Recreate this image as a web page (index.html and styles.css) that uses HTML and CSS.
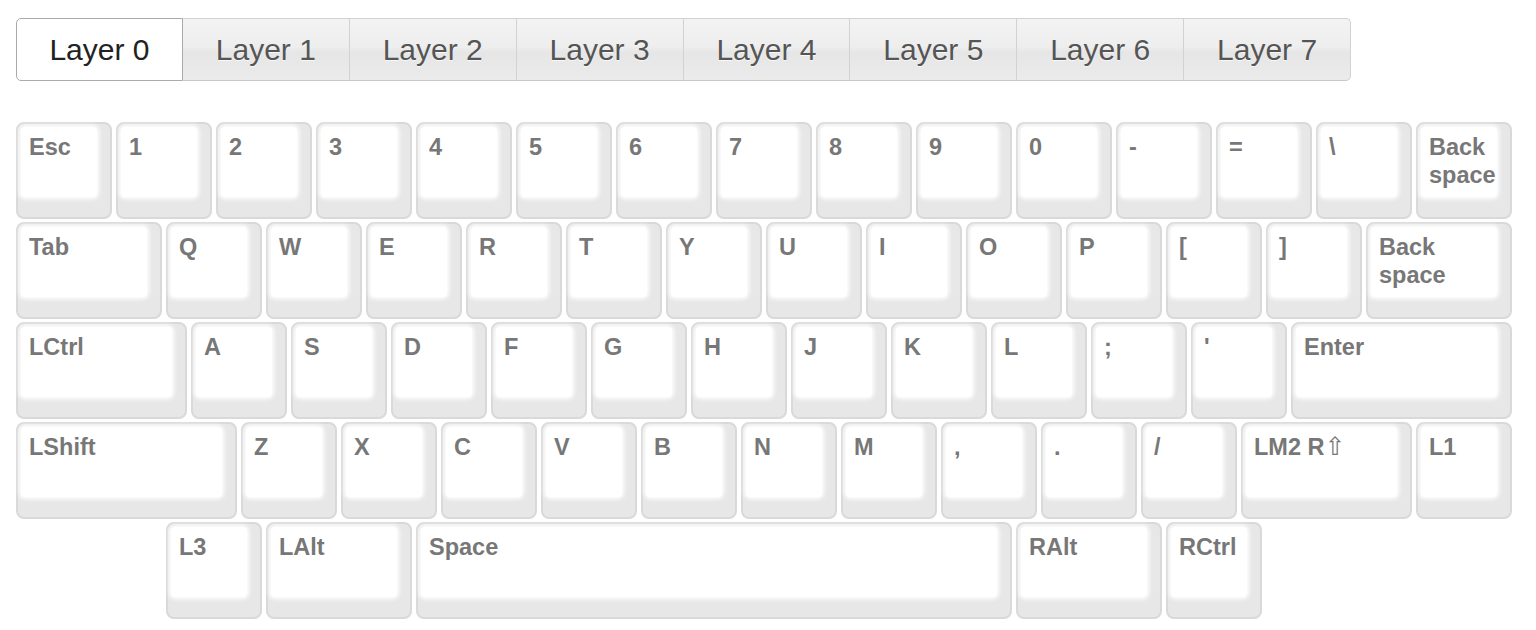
FILE: index.html
```html
<!DOCTYPE html>
<html lang="en">
<head>
<meta charset="utf-8">
<title>Keymap layers</title>
<link rel="stylesheet" href="styles.css">
</head>
<body>
<div class="page">
  <div class="tabs">
    <button class="tab active">Layer 0</button>
    <button class="tab">Layer 1</button>
    <button class="tab">Layer 2</button>
    <button class="tab">Layer 3</button>
    <button class="tab">Layer 4</button>
    <button class="tab">Layer 5</button>
    <button class="tab">Layer 6</button>
    <button class="tab">Layer 7</button>
  </div>

  <div class="keyboard">
    <div class="row">
      <div class="key"><div class="face"><span class="label">Esc</span></div></div>
      <div class="key"><div class="face"><span class="label">1</span></div></div>
      <div class="key"><div class="face"><span class="label">2</span></div></div>
      <div class="key"><div class="face"><span class="label">3</span></div></div>
      <div class="key"><div class="face"><span class="label">4</span></div></div>
      <div class="key"><div class="face"><span class="label">5</span></div></div>
      <div class="key"><div class="face"><span class="label">6</span></div></div>
      <div class="key"><div class="face"><span class="label">7</span></div></div>
      <div class="key"><div class="face"><span class="label">8</span></div></div>
      <div class="key"><div class="face"><span class="label">9</span></div></div>
      <div class="key"><div class="face"><span class="label">0</span></div></div>
      <div class="key"><div class="face"><span class="label">-</span></div></div>
      <div class="key"><div class="face"><span class="label">=</span></div></div>
      <div class="key"><div class="face"><span class="label">\</span></div></div>
      <div class="key"><div class="face"><span class="label">Back<br>space</span></div></div>
    </div>
    <div class="row">
      <div class="key w150"><div class="face"><span class="label">Tab</span></div></div>
      <div class="key"><div class="face"><span class="label">Q</span></div></div>
      <div class="key"><div class="face"><span class="label">W</span></div></div>
      <div class="key"><div class="face"><span class="label">E</span></div></div>
      <div class="key"><div class="face"><span class="label">R</span></div></div>
      <div class="key"><div class="face"><span class="label">T</span></div></div>
      <div class="key"><div class="face"><span class="label">Y</span></div></div>
      <div class="key"><div class="face"><span class="label">U</span></div></div>
      <div class="key"><div class="face"><span class="label">I</span></div></div>
      <div class="key"><div class="face"><span class="label">O</span></div></div>
      <div class="key"><div class="face"><span class="label">P</span></div></div>
      <div class="key"><div class="face"><span class="label">[</span></div></div>
      <div class="key"><div class="face"><span class="label">]</span></div></div>
      <div class="key w150"><div class="face"><span class="label">Back<br>space</span></div></div>
    </div>
    <div class="row">
      <div class="key w175"><div class="face"><span class="label">LCtrl</span></div></div>
      <div class="key"><div class="face"><span class="label">A</span></div></div>
      <div class="key"><div class="face"><span class="label">S</span></div></div>
      <div class="key"><div class="face"><span class="label">D</span></div></div>
      <div class="key"><div class="face"><span class="label">F</span></div></div>
      <div class="key"><div class="face"><span class="label">G</span></div></div>
      <div class="key"><div class="face"><span class="label">H</span></div></div>
      <div class="key"><div class="face"><span class="label">J</span></div></div>
      <div class="key"><div class="face"><span class="label">K</span></div></div>
      <div class="key"><div class="face"><span class="label">L</span></div></div>
      <div class="key"><div class="face"><span class="label">;</span></div></div>
      <div class="key"><div class="face"><span class="label">'</span></div></div>
      <div class="key w225"><div class="face"><span class="label">Enter</span></div></div>
    </div>
    <div class="row">
      <div class="key w225"><div class="face"><span class="label">LShift</span></div></div>
      <div class="key"><div class="face"><span class="label">Z</span></div></div>
      <div class="key"><div class="face"><span class="label">X</span></div></div>
      <div class="key"><div class="face"><span class="label">C</span></div></div>
      <div class="key"><div class="face"><span class="label">V</span></div></div>
      <div class="key"><div class="face"><span class="label">B</span></div></div>
      <div class="key"><div class="face"><span class="label">N</span></div></div>
      <div class="key"><div class="face"><span class="label">M</span></div></div>
      <div class="key"><div class="face"><span class="label">,</span></div></div>
      <div class="key"><div class="face"><span class="label">.</span></div></div>
      <div class="key"><div class="face"><span class="label">/</span></div></div>
      <div class="key w175"><div class="face"><span class="label">LM2 R<span class="arrow">⇧</span></span></div></div>
      <div class="key"><div class="face"><span class="label">L1</span></div></div>
    </div>
    <div class="row">
      <div class="gap150"></div>
      <div class="key"><div class="face"><span class="label">L3</span></div></div>
      <div class="key w150"><div class="face"><span class="label">LAlt</span></div></div>
      <div class="key w600"><div class="face"><span class="label">Space</span></div></div>
      <div class="key w150"><div class="face"><span class="label">RAlt</span></div></div>
      <div class="key"><div class="face"><span class="label">RCtrl</span></div></div>
    </div>
  </div>
</div>
</body>
</html>
```

FILE: styles.css
```css
html, body {
  margin: 0;
  padding: 0;
  background: #ffffff;
}

.page {
  padding: 18px 16px 0 16px;
  font-family: "Liberation Sans", Arial, "DejaVu Sans", sans-serif;
}

/* ---------- layer tabs ---------- */
.tabs {
  display: flex;
  width: 1335px;
}

.tab {
  box-sizing: border-box;
  width: 167px;
  height: 63px;
  margin: 0;
  padding: 0;
  font-family: "Liberation Sans", Arial, sans-serif;
  font-size: 30px;
  color: #555555;
  background: linear-gradient(to bottom, #f3f3f3 0%, #eeeeee 45%, #e6e6e6 55%, #ebebeb 100%);
  border: 1px solid #d2d2d2;
  border-left: none;
  border-bottom-color: #c9c9c9;
  text-shadow: 0 1px 1px rgba(255, 255, 255, 0.75);
  cursor: pointer;
}

.tab:first-child {
  border-left: 1px solid #aaaaaa;
  border-radius: 5px 0 0 5px;
}

.tab:last-child {
  border-radius: 0 5px 5px 0;
}

.tab.active {
  background: #ffffff;
  color: #222222;
  border-color: #aaaaaa;
}

/* ---------- keyboard ---------- */
.keyboard {
  margin-top: 41px;
  display: flex;
  flex-direction: column;
}

.row {
  display: flex;
  margin-bottom: 3px;
}

.gap150 {
  width: 150px;
  flex: none;
}

.key {
  box-sizing: border-box;
  flex: none;
  width: 96px;
  height: 97px;
  margin-right: 4px;
  padding: 3px 13px 20px 3px;
  background: #e7e7e7;
  border: 2px solid #d9d9d9;
  border-radius: 8px;
}

.key.w150 { width: 146px; }
.key.w175 { width: 171px; }
.key.w225 { width: 221px; }
.key.w600 { width: 596px; }

.face {
  box-sizing: border-box;
  height: 100%;
  background: #ffffff;
  border-radius: 4px;
  box-shadow: 0 0 4px 2px #ffffff;
  padding: 6px 0 0 8px;
}

.label {
  display: block;
  font-family: "Liberation Sans", Arial, sans-serif;
  font-weight: bold;
  font-size: 23.5px;
  line-height: 28px;
  color: #777777;
}

.arrow {
  font-family: "DejaVu Sans", sans-serif;
  font-weight: normal;
  font-size: 25px;
  line-height: 20px;
  color: #777777;
}
```
